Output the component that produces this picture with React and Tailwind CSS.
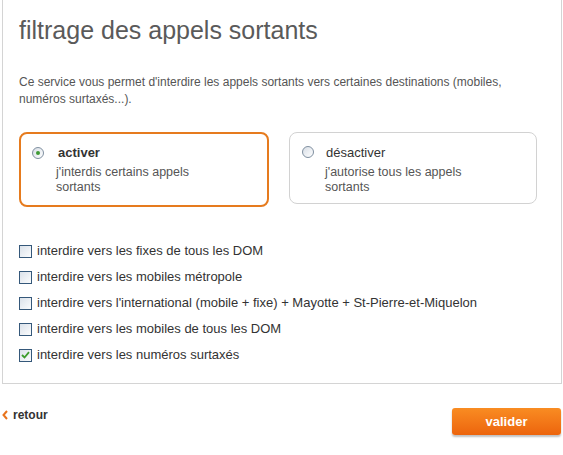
const OPTIONS = [
  { label: "interdire vers les fixes de tous les DOM", checked: false },
  { label: "interdire vers les mobiles métropole", checked: false },
  {
    label:
      "interdire vers l'international (mobile + fixe) + Mayotte + St-Pierre-et-Miquelon",
    checked: false,
  },
  { label: "interdire vers les mobiles de tous les DOM", checked: false },
  { label: "interdire vers les numéros surtaxés", checked: true },
];

function Radio({ checked }) {
  return (
    <span className="flex h-[12px] w-[12px] shrink-0 items-center justify-center rounded-full border border-[#7f8fa0] bg-gradient-to-br from-[#d8dee6] to-[#ffffff]">
      {checked && <span className="h-[4px] w-[4px] rounded-full bg-[#3f9a35]" />}
    </span>
  );
}

function Checkbox({ checked }) {
  return (
    <span className="flex h-[13px] w-[13px] shrink-0 items-center justify-center border border-[#35587a] bg-gradient-to-br from-[#dbe2ea] to-[#fbfcfd]">
      {checked && (
        <svg width="9" height="8" viewBox="0 0 9 8">
          <path
            d="M1 4 L3.5 6.5 L8 1.2"
            fill="none"
            stroke="#3c9c2c"
            strokeWidth="1.8"
          />
        </svg>
      )}
    </span>
  );
}

export default function App() {
  return (
    <div
      className="h-[455px] w-[563px] overflow-hidden bg-white text-[#333]"
      style={{ fontFamily: '"Liberation Sans", Arial, sans-serif' }}
    >
      <div className="ml-[2px] w-[560px] border-x border-b border-[#d4d4d4] pb-[15px] pl-[16px]">
        <h1 className="pt-[16px] text-[25px] leading-[28px] text-[#5a5a5a]">
          filtrage des appels sortants
        </h1>

        <p className="mt-[30px] w-[500px] text-[12px] leading-[17px] text-[#555]">
          Ce service vous permet d'interdire les appels sortants vers certaines
          destinations (mobiles, numéros surtaxés...).
        </p>

        <div className="mt-[24px] flex gap-[20px]">
          <div className="flex h-[75px] w-[250px] gap-[12px] rounded-[8px] border-2 border-[#e67b1e] pl-[11px] pt-[11px]">
            <div className="pt-[2px]">
              <Radio checked />
            </div>
            <div>
              <div className="pl-[2px] text-[13px] font-bold leading-[16px] text-[#333]">
                activer
              </div>
              <div className="mt-[4px] text-[12.5px] leading-[15px] text-[#555]">
                j'interdis certains appels
                <br />
                sortants
              </div>
            </div>
          </div>

          <div className="flex h-[72px] w-[248px] gap-[11px] rounded-[8px] border border-[#d2d2d2] pl-[12px] pt-[12px]">
            <div className="pt-[1px]">
              <Radio />
            </div>
            <div>
              <div className="pl-[1px] text-[13px] leading-[16px] text-[#333]">
                désactiver
              </div>
              <div className="mt-[4px] text-[12.5px] leading-[15px] text-[#555]">
                j'autorise tous les appels
                <br />
                sortants
              </div>
            </div>
          </div>
        </div>

        <ul className="mt-[31px]">
          {OPTIONS.map((opt) => (
            <li
              key={opt.label}
              className="flex h-[26px] items-center gap-[5px] text-[13px] text-[#333]"
            >
              <Checkbox checked={opt.checked} />
              <span>{opt.label}</span>
            </li>
          ))}
        </ul>
      </div>

      <div className="mt-[24px] flex items-start justify-between pr-[2px]">
        <button
          type="button"
          className="mt-[-2px] flex items-center gap-[5px] pl-[2px] text-[12px] font-bold text-[#333]"
        >
          <svg width="6" height="10" viewBox="0 0 6 10">
            <path
              d="M5 1 L1.5 5 L5 9"
              fill="none"
              stroke="#e8731c"
              strokeWidth="2"
            />
          </svg>
          retour
        </button>

        <button
          type="button"
          className="h-[27px] w-[109px] rounded-[3px] bg-gradient-to-b from-[#f98c22] to-[#ec640c] text-[13px] font-bold text-white shadow-[0_2px_2px_rgba(0,0,0,0.25)]"
        >
          valider
        </button>
      </div>
    </div>
  );
}
